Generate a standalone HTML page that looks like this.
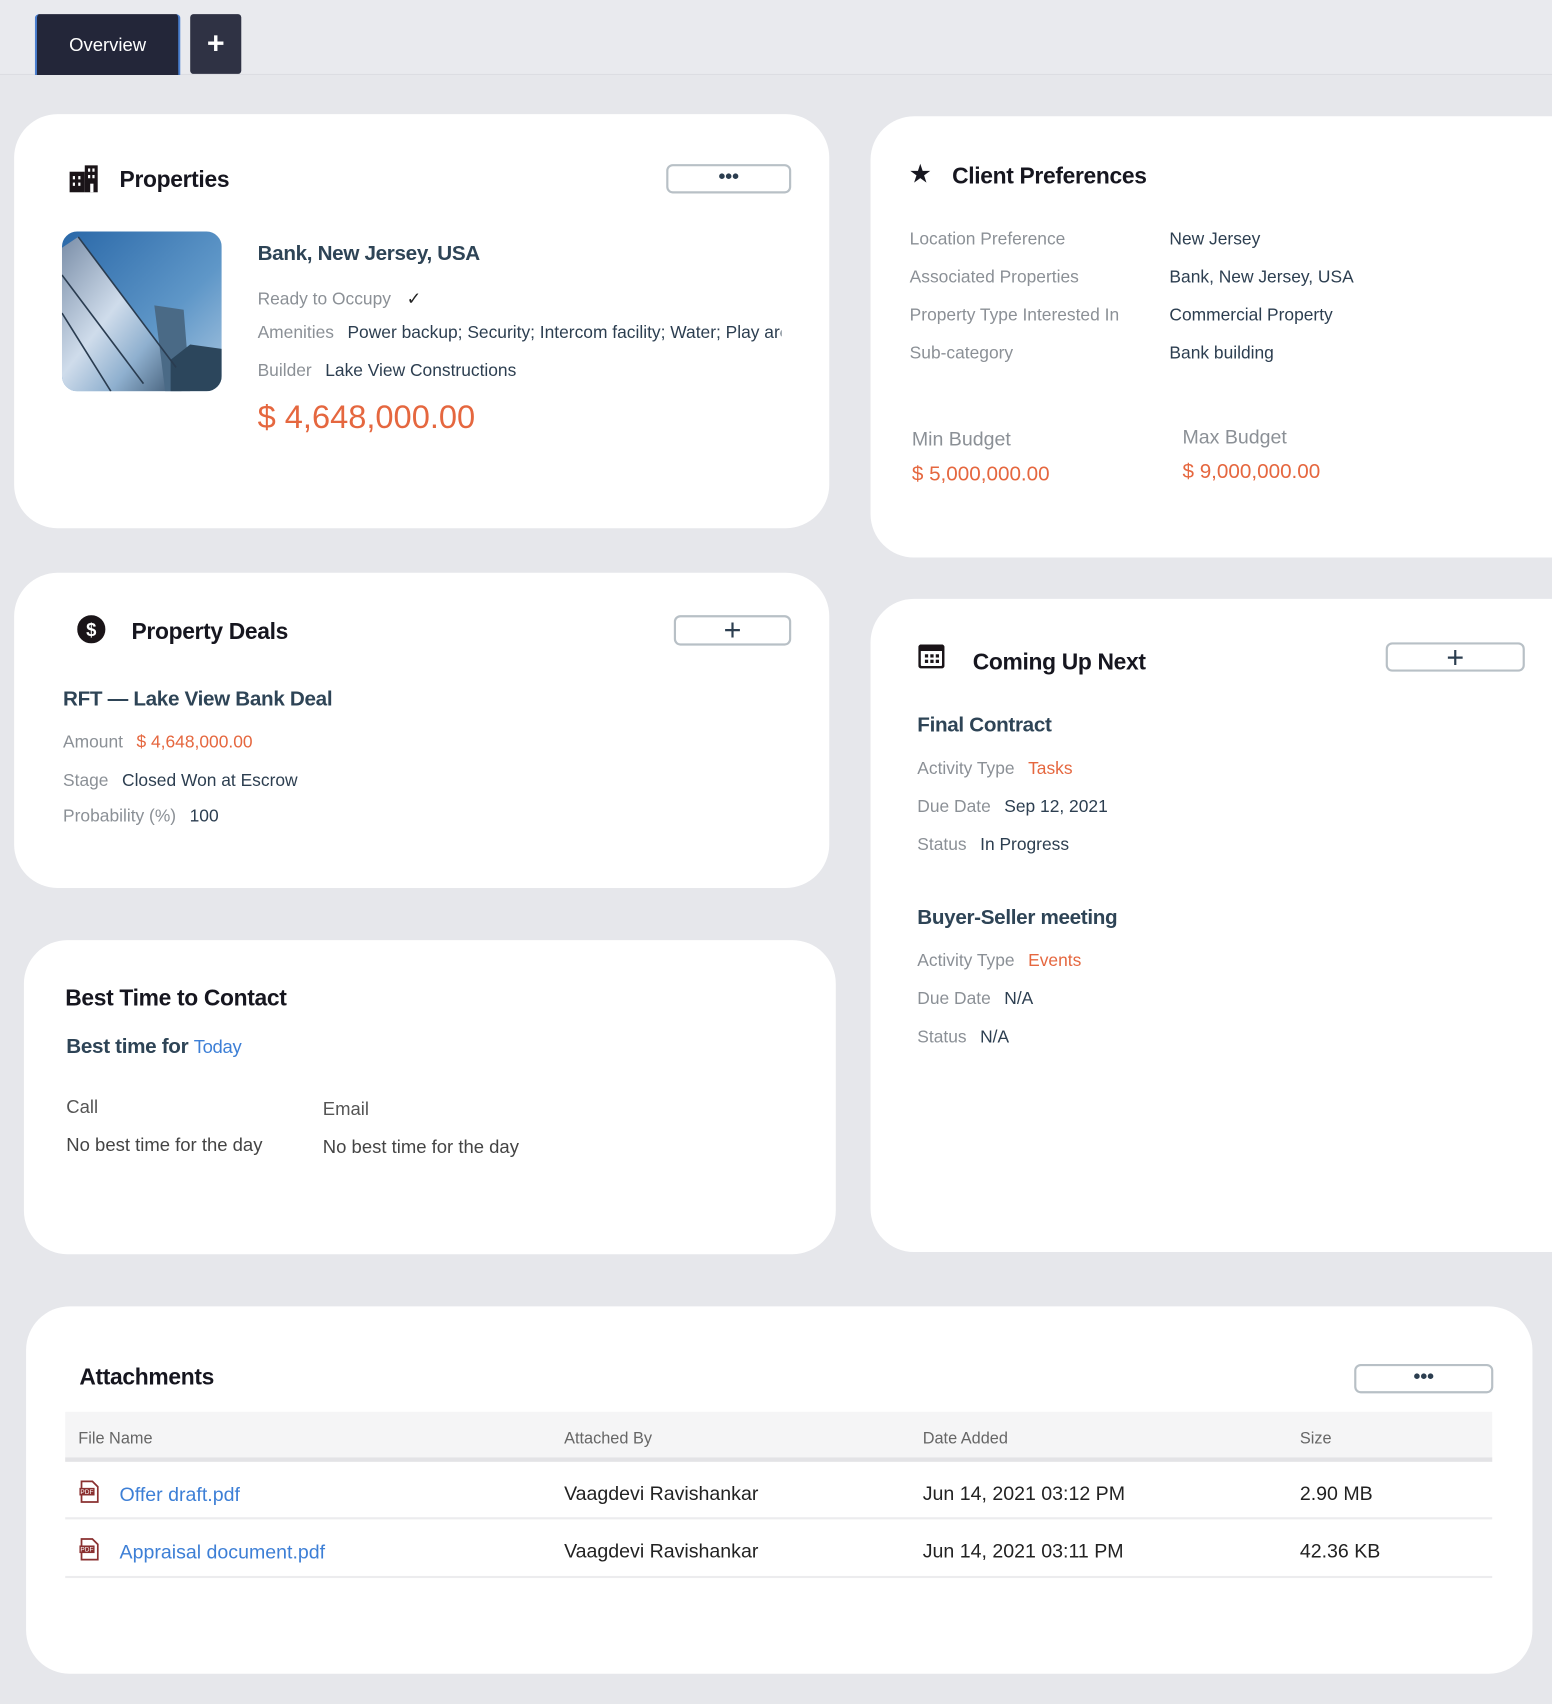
<!DOCTYPE html>
<html><head><meta charset="utf-8">
<style>
html,body{margin:0;padding:0;width:1552px;height:1704px;overflow:hidden;background:#e6e7eb;}
#w{position:absolute;left:0;top:0;width:1428px;height:1568px;transform:scale(1.08683);transform-origin:0 0;font-family:"Liberation Sans",sans-serif;}
.a{position:absolute;white-space:nowrap;}
.card{position:absolute;background:#fff;border-radius:40px;}
.h{font-size:21px;font-weight:bold;color:#16161f;letter-spacing:-0.3px}
.l{font-size:16px;color:#8b9096;}
.v{font-size:16px;color:#2c3e50;}
.o{color:#e5673f;}
.t{font-size:19px;font-weight:bold;color:#2e4456;letter-spacing:-0.3px}
.l,.v,.t,.h,.o,.tx{margin-top:3px}
.btn{position:absolute;border:2px solid #b8c0c6;border-radius:6px;background:#fff;box-sizing:border-box;}
.lk{color:#3d7fd6;}
</style></head><body><div id="w">
<div style="position:absolute;left:0;top:0;width:1428px;height:68px;background:#e9eaee;border-bottom:1px solid #dcdde2"></div>
<div class="a" style="left:32px;top:13px;width:134px;height:56px;background:#232639;border-left:2px solid #4a7fd0;border-right:2px solid #4a7fd0;border-radius:4px 4px 0 0;box-sizing:border-box;color:#fff;font-size:17px;text-align:center;line-height:58px">Overview</div>
<div class="a" style="left:175px;top:13px;width:47px;height:55px;background:#2f3244;border-radius:3px;color:#fff;font-size:28px;font-weight:bold;text-align:center;line-height:54px">+</div>

<!-- Properties -->
<div class="card" style="left:13px;top:105px;width:750px;height:381px"></div>
<svg class="a" style="left:64px;top:152px" width="26" height="25" viewBox="0 0 26 25"><rect x="0" y="6" width="14" height="19" fill="#1a1418"/><rect x="14" y="0" width="12" height="25" fill="#1a1418"/><g fill="#fff"><rect x="3" y="10" width="2" height="3"/><rect x="8" y="10" width="2" height="3"/><rect x="3" y="16" width="2" height="3"/><rect x="8" y="16" width="2" height="3"/><rect x="17" y="3" width="2" height="3"/><rect x="21" y="3" width="2" height="3"/><rect x="17" y="9" width="2" height="3"/><rect x="21" y="9" width="2" height="3"/><rect x="19" y="17" width="3" height="8"/></g></svg>
<div class="a h" style="left:110px;top:151px">Properties</div>
<div class="btn" style="left:613px;top:151px;width:115px;height:27px"><div style="text-align:center;font-size:18px;font-weight:bold;color:#2c3e50;line-height:18px">•••</div></div>
<svg class="a" style="left:57px;top:213px" width="147" height="147" viewBox="0 0 147 147"><defs><clipPath id="c"><rect width="147" height="147" rx="14"/></clipPath><linearGradient id="s" x1="0" y1="0" x2="1" y2="1"><stop offset="0" stop-color="#2a68a8"/><stop offset="0.6" stop-color="#5f97c8"/><stop offset="1" stop-color="#a9c6e0"/></linearGradient><linearGradient id="g" x1="0" y1="0" x2="1" y2="1"><stop offset="0" stop-color="#7a8ea8"/><stop offset="0.45" stop-color="#cfdceb"/><stop offset="0.7" stop-color="#8fb0cf"/><stop offset="1" stop-color="#3c5670"/></linearGradient></defs><g clip-path="url(#c)"><rect width="147" height="147" fill="url(#s)"/><path d="M0 15 L15 5 L105 125 L110 147 L0 147Z" fill="url(#g)"/><path d="M85 68 L112 72 L118 147 L95 147Z" fill="#4a6a86"/><path d="M100 118 L118 104 L147 108 L147 147 L100 147Z" fill="#2c465c"/><path d="M15 5 L105 125 M0 40 L75 140 M0 75 L45 147" stroke="#2a3c50" stroke-width="1.5"/></g></svg>
<div class="a t" style="left:237px;top:220px">Bank, New Jersey, USA</div>
<div class="a l" style="left:237px;top:262px">Ready to Occupy <span style="color:#222;margin-left:10px">✓</span></div>
<div class="a l" style="left:237px;top:295px;width:482px;overflow:hidden">Amenities <span class="v" style="margin-left:8px">Power backup; Security; Intercom facility; Water; Play area</span></div>
<div class="a l" style="left:237px;top:330px">Builder <span class="v" style="margin-left:8px">Lake View Constructions</span></div>
<div class="a o" style="left:237px;top:365px;font-size:30px">$ 4,648,000.00</div>

<!-- Client Preferences -->
<div class="card" style="left:801px;top:107px;width:680px;height:406px"></div>
<div class="a" style="left:836px;top:146px;font-size:24px;color:#16161f">★</div>
<div class="a h" style="left:876px;top:148px">Client Preferences</div>
<div class="a l" style="left:837px;top:209px">Location Preference</div><div class="a v" style="left:1076px;top:209px">New Jersey</div>
<div class="a l" style="left:837px;top:244px">Associated Properties</div><div class="a v" style="left:1076px;top:244px">Bank, New Jersey, USA</div>
<div class="a l" style="left:837px;top:279px">Property Type Interested In</div><div class="a v" style="left:1076px;top:279px">Commercial Property</div>
<div class="a l" style="left:837px;top:314px">Sub-category</div><div class="a v" style="left:1076px;top:314px">Bank building</div>
<div class="a l" style="left:839px;top:391px;font-size:18px">Min Budget</div>
<div class="a o" style="left:839px;top:423px;font-size:19px">$ 5,000,000.00</div>
<div class="a l" style="left:1088px;top:389px;font-size:18px">Max Budget</div>
<div class="a o" style="left:1088px;top:421px;font-size:19px">$ 9,000,000.00</div>

<!-- Property Deals -->
<div class="card" style="left:13px;top:527px;width:750px;height:290px"></div>
<svg class="a" style="left:71px;top:566px" width="26" height="26" viewBox="0 0 26 26"><circle cx="13" cy="13" r="13" fill="#1a1418"/><text x="13" y="19" text-anchor="middle" fill="#fff" font-size="17" font-weight="bold" font-family="Liberation Sans">$</text></svg>
<div class="a h" style="left:121px;top:567px">Property Deals</div>
<div class="btn" style="left:620px;top:566px;width:108px;height:28px"><div style="text-align:center;font-size:28px;color:#2c3e50;line-height:24px">+</div></div>
<div class="a t" style="left:58px;top:630px">RFT — Lake View Bank Deal</div>
<div class="a l" style="left:58px;top:672px">Amount <span class="o" style="margin-left:8px">$ 4,648,000.00</span></div>
<div class="a l" style="left:58px;top:707px">Stage <span class="v" style="margin-left:8px">Closed Won at Escrow</span></div>
<div class="a l" style="left:58px;top:740px">Probability (%) <span class="v" style="margin-left:8px">100</span></div>

<!-- Coming Up Next -->
<div class="card" style="left:801px;top:551px;width:680px;height:601px"></div>
<svg class="a" style="left:845px;top:593px" width="24" height="22" viewBox="0 0 24 22"><rect x="1" y="1" width="22" height="20" rx="2" fill="none" stroke="#1a1418" stroke-width="2.5"/><rect x="1" y="1" width="22" height="5" fill="#1a1418"/><g fill="#1a1418"><rect x="6" y="9" width="3" height="3"/><rect x="11" y="9" width="3" height="3"/><rect x="16" y="9" width="3" height="3"/><rect x="6" y="14" width="3" height="3"/><rect x="11" y="14" width="3" height="3"/><rect x="16" y="14" width="3" height="3"/></g></svg>
<div class="a h" style="left:895px;top:595px">Coming Up Next</div>
<div class="btn" style="left:1275px;top:591px;width:128px;height:27px"><div style="text-align:center;font-size:28px;color:#2c3e50;line-height:24px">+</div></div>
<div class="a t" style="left:844px;top:654px">Final Contract</div>
<div class="a l" style="left:844px;top:696px">Activity Type <span class="o" style="margin-left:8px">Tasks</span></div>
<div class="a l" style="left:844px;top:731px">Due Date <span class="v" style="margin-left:8px">Sep 12, 2021</span></div>
<div class="a l" style="left:844px;top:766px">Status <span class="v" style="margin-left:8px">In Progress</span></div>
<div class="a t" style="left:844px;top:831px">Buyer-Seller meeting</div>
<div class="a l" style="left:844px;top:873px">Activity Type <span class="o" style="margin-left:8px">Events</span></div>
<div class="a l" style="left:844px;top:908px">Due Date <span class="v" style="margin-left:8px">N/A</span></div>
<div class="a l" style="left:844px;top:943px">Status <span class="v" style="margin-left:8px">N/A</span></div>

<!-- Best Time -->
<div class="card" style="left:22px;top:865px;width:747px;height:289px"></div>
<div class="a h" style="left:60px;top:904px">Best Time to Contact</div>
<div class="a t" style="left:61px;top:950px">Best time for <span class="lk" style="font-weight:normal;font-size:17px">Today</span></div>
<div class="a tx" style="left:61px;top:1006px;font-size:17px;color:#555">Call</div>
<div class="a tx" style="left:61px;top:1041px;font-size:17px;color:#444">No best time for the day</div>
<div class="a tx" style="left:297px;top:1008px;font-size:17px;color:#555">Email</div>
<div class="a tx" style="left:297px;top:1043px;font-size:17px;color:#444">No best time for the day</div>

<!-- Attachments -->
<div class="card" style="left:24px;top:1202px;width:1386px;height:338px"></div>
<div class="a h" style="left:73px;top:1253px">Attachments</div>
<div class="btn" style="left:1246px;top:1255px;width:128px;height:27px"><div style="text-align:center;font-size:18px;font-weight:bold;color:#2c3e50;line-height:18px">•••</div></div>
<div class="a" style="left:60px;top:1299px;width:1313px;height:42px;background:#f5f5f6;border-bottom:4px solid #e3e3e6"></div>
<div class="a tx" style="left:72px;top:1312px;font-size:15px;color:#666">File Name</div>
<div class="a tx" style="left:519px;top:1312px;font-size:15px;color:#666">Attached By</div>
<div class="a tx" style="left:849px;top:1312px;font-size:15px;color:#666">Date Added</div>
<div class="a tx" style="left:1196px;top:1312px;font-size:15px;color:#666">Size</div>
<div class="a" style="left:60px;top:1396px;width:1313px;height:2px;background:#ececee"></div>
<div class="a" style="left:60px;top:1450px;width:1313px;height:2px;background:#ececee"></div>
<svg class="a" style="left:73px;top:1362px" width="18" height="21" viewBox="0 0 18 21"><path d="M2 1h10l5 5v14H2z" fill="#fff" stroke="#8a3030" stroke-width="1.6"/><rect x="0" y="7" width="14" height="7" fill="#8a3030"/><text x="7" y="12.5" text-anchor="middle" font-size="6" fill="#fff" font-family="Liberation Sans">PDF</text></svg>
<div class="a lk tx" style="left:110px;top:1362px;font-size:18px">Offer draft.pdf</div>
<div class="a tx" style="left:519px;top:1361px;font-size:18px;color:#222">Vaagdevi Ravishankar</div>
<div class="a tx" style="left:849px;top:1361px;font-size:18px;color:#222">Jun 14, 2021 03:12 PM</div>
<div class="a tx" style="left:1196px;top:1361px;font-size:18px;color:#222">2.90 MB</div>
<svg class="a" style="left:73px;top:1415px" width="18" height="21" viewBox="0 0 18 21"><path d="M2 1h10l5 5v14H2z" fill="#fff" stroke="#8a3030" stroke-width="1.6"/><rect x="0" y="7" width="14" height="7" fill="#8a3030"/><text x="7" y="12.5" text-anchor="middle" font-size="6" fill="#fff" font-family="Liberation Sans">PDF</text></svg>
<div class="a lk tx" style="left:110px;top:1415px;font-size:18px">Appraisal document.pdf</div>
<div class="a tx" style="left:519px;top:1414px;font-size:18px;color:#222">Vaagdevi Ravishankar</div>
<div class="a tx" style="left:849px;top:1414px;font-size:18px;color:#222">Jun 14, 2021 03:11 PM</div>
<div class="a tx" style="left:1196px;top:1414px;font-size:18px;color:#222">42.36 KB</div>
</div></body></html>
